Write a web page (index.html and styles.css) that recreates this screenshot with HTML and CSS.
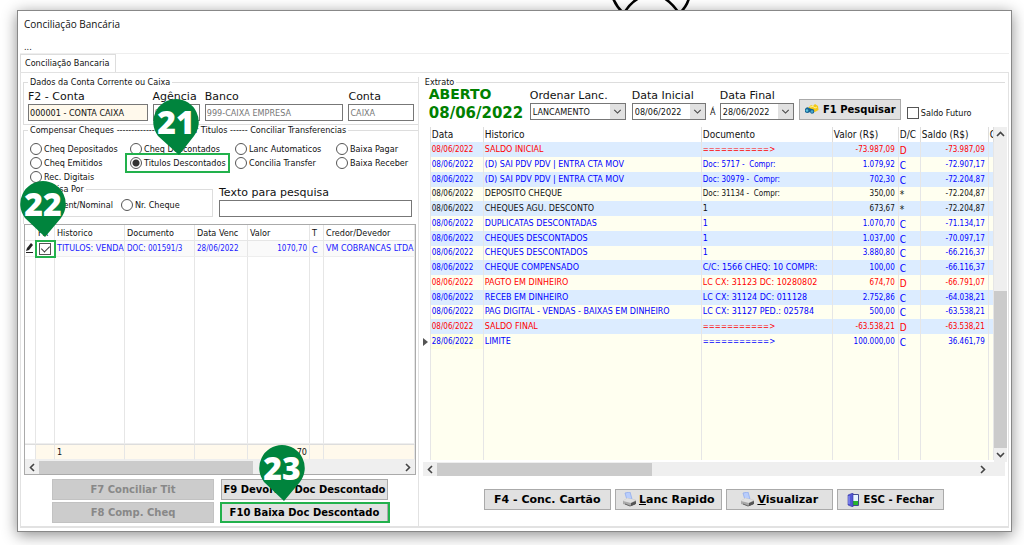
FILE: index.html
```html
<!DOCTYPE html>
<html lang="pt-BR">
<head>
<meta charset="utf-8">
<meta name="viewport" content="width=device-width, initial-scale=1">
<title>Conciliação Bancária</title>
<link rel="stylesheet" href="styles.css">
</head>
<body>
<svg class="backdrop" width="80" height="14" viewBox="0 0 80 14" fill="none" stroke="#000" stroke-width="2.6" aria-hidden="true">
  <path d="M1 -2Q4 6 11 13M27 -2Q18 3 12 13M52 -2Q60 3 67 13M77 -2Q75 6 68 13"/>
</svg>
<main class="window">
  <h1 class="title">Conciliação Bancária</h1>
  <div class="menu"><button type="button">...</button></div>
  <div class="tabs"><button type="button" class="tab">Conciliação Bancaria</button></div>
  <div class="page">
    <section class="left">
      <fieldset class="group account">
        <legend>Dados da Conta Corrente ou Caixa</legend>
        <div class="account-fields">
          <label class="field"><span>F2 - Conta</span><input class="cream" type="text" value="000001 - CONTA CAIXA"></label>
          <label class="field"><span>Agência</span><input type="text" value="0001" disabled></label>
          <label class="field"><span>Banco</span><input type="text" value="999-CAIXA EMPRESA" disabled></label>
          <label class="field"><span>Conta</span><input type="text" value="CAIXA" disabled></label>
        </div>
      </fieldset>
      <fieldset class="group options">
        <legend>Compensar Cheques --------------- Conciliar Titulos ------ Conciliar Transferencias</legend>
        <div class="radios">
          <label><input type="radio" name="tipo">Cheq Depositados</label>
          <label><input type="radio" name="tipo">Cheq Descontados</label>
          <label><input type="radio" name="tipo">Lanc Automaticos</label>
          <label><input type="radio" name="tipo">Baixa Pagar</label>
          <label><input type="radio" name="tipo">Cheq Emitidos</label>
          <label class="marked"><input type="radio" name="tipo" checked>Titulos Descontados</label>
          <label><input type="radio" name="tipo">Concilia Transfer</label>
          <label><input type="radio" name="tipo">Baixa Receber</label>
          <label><input type="radio" name="tipo">Rec. Digitais</label>
        </div>
        <div class="search">
          <fieldset class="group search-by">
            <legend>Pesquisa Por</legend>
            <label><input type="radio" name="por">Emitent/Nominal</label>
            <label><input type="radio" name="por">Nr. Cheque</label>
          </fieldset>
          <label class="field search-text"><span>Texto para pesquisa</span><input type="text"></label>
        </div>
      </fieldset>
      <div class="grid-box">
        <table class="titles">
          <colgroup><col class="w-ind"><col class="w-fx"><col class="w-hist"><col class="w-doc"><col class="w-date"><col class="w-val"><col class="w-t"><col></colgroup>
          <thead><tr><th></th><th>FX</th><th>Historico</th><th>Documento</th><th>Data Venc</th><th>Valor</th><th>T</th><th>Credor/Devedor</th></tr></thead>
          <tbody>
            <tr class="item"><td class="ind"><svg width="9" height="11" viewBox="0 0 9 11" aria-hidden="true"><path d="M1 9L2 6L6 1L8 3L4 8Z" fill="#222"/><path d="M1 10.500H8" stroke="#222"/></svg></td><td class="check"><input type="checkbox" checked aria-label="FX"></td><td class="broad">TITULOS: VENDA</td><td>DOC: 001591/3</td><td>28/06/2022</td><td class="num">1070,70</td><td class="dc">C</td><td class="broad">VM COBRANCAS LTDA</td></tr>
            <tr class="fill"><td></td><td></td><td></td><td></td><td></td><td></td><td></td><td></td></tr>
          </tbody>
          <tfoot><tr><td></td><td></td><td>1</td><td></td><td></td><td class="num">1070,70</td><td></td><td></td></tr></tfoot>
        </table>
        <div class="hbar"><svg width="14" height="13" viewBox="0 0 14 13"><path d="M9 3L5.500 6.500L9 10"/></svg><i class="thumb left-thumb"></i><svg width="14" height="13" viewBox="0 0 14 13"><path d="M5 3L8.500 6.500L5 10"/></svg></div>
      </div>
      <div class="left-actions">
        <button type="button" disabled>F7 Conciliar Tit</button>
        <button type="button">F9 Devolver Doc Descontado</button>
        <button type="button" disabled>F8 Comp. Cheq</button>
        <button type="button" class="marked-button">F10 Baixa Doc Descontado</button>
      </div>
    </section>

    <fieldset class="group right">
      <legend>Extrato</legend>
      <div class="filters">
        <div class="status"><strong>ABERTO</strong><b>08/06/2022</b></div>
        <label class="field order"><span>Ordenar Lanc.</span><span class="combo"><select><option>LANCAMENTO</option></select><svg viewBox="0 0 14 14"><path d="M4 5.500L7 8.500L10 5.500"/></svg></span></label>
        <label class="field date"><span>Data Inicial</span><span class="combo"><select><option>08/06/2022</option></select><svg viewBox="0 0 14 14"><path d="M4 5.500L7 8.500L10 5.500"/></svg></span></label>
        <span class="to">Á</span>
        <label class="field date"><span>Data Final</span><span class="combo"><select><option>28/06/2022</option></select><svg viewBox="0 0 14 14"><path d="M4 5.500L7 8.500L10 5.500"/></svg></span></label>
        <button type="button" class="find"><svg width="15" height="11" viewBox="0 0 15 11" aria-hidden="true"><path d="M4 4L7 1L9 2L11 0L14 2L14.500 6L11 8L7 7Z" fill="#f4c916"/><path d="M6 3L9 2.500L11 4L13 3" stroke="#fff39a" fill="none"/><path d="M1 5Q3 2 5 4L8 5Q11 5 10 9Q7 11 6 8Q3 10 1 8Z" fill="#176493"/><circle cx="3" cy="6.500" r="1.300" fill="#5bc4df"/><circle cx="8" cy="7.500" r="1.300" fill="#48a9cf"/></svg>F1 Pesquisar</button>
        <label class="future"><input type="checkbox">Saldo Futuro</label>
      </div>
      <div class="statement-box">
        <table class="statement">
          <colgroup><col class="s-ind"><col class="s-date"><col class="s-hist"><col class="s-doc"><col class="s-val"><col class="s-dc"><col class="s-bal"><col class="s-more"></colgroup>
          <thead><tr><th></th><th>Data</th><th>Historico</th><th>Documento</th><th>Valor (R$)</th><th>D/C</th><th>Saldo (R$)</th><th>C</th></tr></thead>
          <tbody>
            <tr class="red"><td></td><td>08/06/2022</td><td>SALDO INICIAL</td><td class="narrow">===========&gt;</td><td>-73.987,09</td><td>D</td><td>-73.987,09</td><td></td></tr>
            <tr class="blue"><td></td><td>08/06/2022</td><td>(D) SAI PDV PDV | ENTRA CTA MOV</td><td class="narrow">Doc: 5717 -&nbsp; Compr:</td><td>1.079,92</td><td>C</td><td>-72.907,17</td><td></td></tr>
            <tr class="blue"><td></td><td>08/06/2022</td><td>(D) SAI PDV PDV | ENTRA CTA MOV</td><td class="narrow">Doc: 30979 -&nbsp; Compr:</td><td>702,30</td><td>C</td><td>-72.204,87</td><td></td></tr>
            <tr><td></td><td>08/06/2022</td><td>DEPOSITO CHEQUE</td><td class="narrow">Doc: 31134 -&nbsp; Compr:</td><td>350,00</td><td>*</td><td>-72.204,87</td><td></td></tr>
            <tr><td></td><td>08/06/2022</td><td>CHEQUES AGU. DESCONTO</td><td>1</td><td>673,67</td><td>*</td><td>-72.204,87</td><td></td></tr>
            <tr class="blue"><td></td><td>08/06/2022</td><td>DUPLICATAS DESCONTADAS</td><td>1</td><td>1.070,70</td><td>C</td><td>-71.134,17</td><td></td></tr>
            <tr class="blue"><td></td><td>08/06/2022</td><td>CHEQUES DESCONTADOS</td><td>1</td><td>1.037,00</td><td>C</td><td>-70.097,17</td><td></td></tr>
            <tr class="blue"><td></td><td>08/06/2022</td><td>CHEQUES DESCONTADOS</td><td>1</td><td>3.880,80</td><td>C</td><td>-66.216,37</td><td></td></tr>
            <tr class="blue"><td></td><td>08/06/2022</td><td>CHEQUE COMPENSADO</td><td>C/C: 1566 CHEQ: 10 COMPR:</td><td>100,00</td><td>C</td><td>-66.116,37</td><td></td></tr>
            <tr class="red"><td></td><td>08/06/2022</td><td>PAGTO EM DINHEIRO</td><td>LC CX: 31123 DC: 10280802</td><td>674,70</td><td>D</td><td>-66.791,07</td><td></td></tr>
            <tr class="blue"><td></td><td>08/06/2022</td><td>RECEB EM DINHEIRO</td><td>LC CX: 31124 DC: 011128</td><td>2.752,86</td><td>C</td><td>-64.038,21</td><td></td></tr>
            <tr class="blue"><td></td><td>08/06/2022</td><td>PAG DIGITAL - VENDAS - BAIXAS EM DINHEIRO</td><td>LC CX: 31127 PED.: 025784</td><td>500,00</td><td>C</td><td>-63.538,21</td><td></td></tr>
            <tr class="red"><td></td><td>08/06/2022</td><td>SALDO FINAL</td><td class="narrow">===========&gt;</td><td>-63.538,21</td><td>D</td><td>-63.538,21</td><td></td></tr>
            <tr class="blue"><td><svg class="cursor" width="5" height="8" viewBox="0 0 5 8"><path d="M0 0L5 4L0 8Z" fill="#555"/></svg></td><td class="selected">28/06/2022</td><td>LIMITE</td><td class="narrow">===========&gt;</td><td>100.000,00</td><td>C</td><td>36.461,79</td><td></td></tr>
            <tr class="rest"><td></td><td></td><td></td><td></td><td></td><td></td><td></td><td></td></tr>
          </tbody>
        </table>
        <div class="vbar"><svg width="13" height="14" viewBox="0 0 13 14"><path d="M3 9L6.500 5.500L10 9"/></svg><i class="thumb"></i><svg width="13" height="14" viewBox="0 0 13 14"><path d="M3 5L6.500 8.500L10 5"/></svg></div>
      </div>
      <div class="hbar right-bar"><svg width="14" height="13" viewBox="0 0 14 13"><path d="M9 3L5.500 6.500L9 10"/></svg><i class="thumb right-thumb"></i><svg width="14" height="13" viewBox="0 0 14 13"><path d="M5 3L8.500 6.500L5 10"/></svg></div>
      <div class="right-actions">
        <button type="button" class="wide">F4 - Conc. Cartão</button>
        <button type="button"><svg width="15" height="15" viewBox="0 0 15 15" aria-hidden="true"><path d="M3 1L8 0L10 7L5 8Z" fill="#b9cdfb" stroke="#8ba8ec" stroke-width=".7"/><path d="M1 9L5 6L14 8L13 12L8 14L1 12Z" fill="#aaa"/><path d="M1 9L5 6L14 8L9 11Z" fill="#e0e0e0"/><path d="M3 12L8 14L13 12" stroke="#666" fill="none"/><path d="M9 11L14 9V12L9 14Z" fill="#555"/></svg><span><u>L</u>anc Rapido</span></button>
        <button type="button"><svg width="15" height="15" viewBox="0 0 15 15" aria-hidden="true"><path d="M3 1L8 0L10 7L5 8Z" fill="#b9cdfb" stroke="#8ba8ec" stroke-width=".7"/><path d="M1 9L5 6L14 8L13 12L8 14L1 12Z" fill="#aaa"/><path d="M1 9L5 6L14 8L9 11Z" fill="#e0e0e0"/><path d="M3 12L8 14L13 12" stroke="#666" fill="none"/><path d="M9 11L14 9V12L9 14Z" fill="#555"/></svg><span><u>V</u>isualizar</span></button>
        <button type="button" class="exit"><svg width="12" height="14" viewBox="0 0 12 14" aria-hidden="true"><path d="M5 1.500H11.500V12.500H5" fill="#e8f6ff" stroke="#444d91"/><path d="M6 8H11V12H6Z" fill="#27b72c"/><path d="M1 2L6 0V14L1 12Z" fill="#5257d5" stroke="#35389f" stroke-width=".6"/><path d="M2 3V11" stroke="#9ca3ff"/></svg>ESC - Fechar</button>
      </div>
    </fieldset>
  </div>
</main>
<div class="pin pin-21"><svg viewBox="0 0 46 56"><path d="M23 0A23 23 0 0 1 41 37L26 56L5 37A23 23 0 0 1 23 0Z"/></svg><span>21</span></div>
<div class="pin pin-22"><svg viewBox="0 0 46 56"><path d="M23 0A23 23 0 0 1 41 37L25 56L5 37A23 23 0 0 1 23 0Z"/></svg><span>22</span></div>
<div class="pin pin-23"><svg viewBox="0 0 46 56"><path d="M23 0A23 23 0 0 1 41 37L25 56L5 37A23 23 0 0 1 23 0Z"/></svg><span>23</span></div>
</body>
</html>
```
FILE: styles.css
```css
* { box-sizing: border-box; }
body {
  margin: 0;
  min-height: 100vh;
  padding: 10px 12px 13px 17px;
  display: flex;
  background: #fff;
  color: #111;
  font: 9px/10px "DejaVu Sans Condensed", "DejaVu Sans", sans-serif;
  overflow: hidden;
}
button, input, select { font: inherit; color: inherit; margin: 0; }
.backdrop { position: absolute; left: 612px; top: 0; }
.window {
  position: relative;
  flex: 1;
  min-width: 0;
  display: flex;
  flex-direction: column;
  padding: 0 2px 3px;
  background: #fff;
  border: 1px solid #888;
  box-shadow: 0 3px 14px rgba(0, 0, 0, .45);
}
.title { margin: 0; padding: 7px 4px 0; font: 10px/13px "Open Sans", sans-serif; }
.menu { height: 23px; padding: 11px 4px 0; border-bottom: 1px solid #eee; }
.menu button { border: 0; padding: 0; background: none; line-height: 10px; display: block; }
.tabs { display: flex; }
.tab {
  height: 18px;
  padding: 0 6px 2px 4px;
  border: 1px solid #ddd;
  border-bottom: 0;
  background: #fff;
}
.page {
  flex: 1;
  display: flex;
  gap: 4px;
  padding: 4px 3px 0 2px;
  border: 1px solid #e2e2e2;
  border-bottom-width: 2px;
}
.left { flex: 396 1 0; min-width: 0; display: flex; flex-direction: column; border-right: 1px solid #e2e2e2; }
.group { margin: 0; padding: 0; border: 1px solid #ddd; min-width: 0; }
.group legend { padding: 0 2px; height: 10px; white-space: nowrap; }
.account { border-right: 0; padding: 3px 4px 3px; }
.account-fields { display: grid; grid-template-columns: 119fr 47fr 138fr 65fr; column-gap: 5px; }
.field { display: flex; flex-direction: column; min-width: 0; }
.field > span:first-child { font: 11px/14px "DejaVu Sans", sans-serif; white-space: nowrap; }
.field input { width: 100%; height: 17px; padding: 0 1px; border: 1px solid #777; background: #fff; border-radius: 0; }
.field input:disabled { color: #777; }
.field input.cream { background: #fff9ec; }
.options { border-right: 0; border-bottom: 0; padding: 7px 4px 7px; }
.radios { display: grid; grid-template-columns: 100px 105px 101px 1fr; grid-auto-rows: 14px; padding-left: 2px; }
label { white-space: nowrap; }
.radios label, .search-by label { display: flex; align-items: center; gap: 2px; position: relative; }
.radios label { justify-self: start; }
input[type=radio] {
  appearance: none;
  flex: none;
  width: 12px;
  height: 12px;
  border: 1px solid #555;
  border-radius: 50%;
  background: #fff;
}
input[type=radio]:checked { background: radial-gradient(circle, #333 0 3px, #fff 4px); }
.marked::after, .marked-button::after {
  content: "";
  position: absolute;
  inset: -3px -4px -3px -5px;
  border: 2px solid #22b14c;
}
.search { display: grid; grid-template-columns: 185px 1fr; gap: 6px; padding-right: 2px; }
.search-by { display: flex; gap: 8px; padding: 3px 2px 4px; }
.search-text { padding-top: 2px; }
.grid-box { flex: 1; display: flex; flex-direction: column; margin: 0 2px 0 1px; border: 1px solid #aaa; }
table { border-collapse: separate; border-spacing: 0; table-layout: fixed; width: 100%; }
th, td { padding: 0 2px; font-weight: 400; text-align: left; white-space: nowrap; overflow: hidden; border-right: 1px solid #e6e6e6; }
.titles { flex: 1; height: 234px; }
.titles th { height: 16px; border-bottom: 1px solid #e6e6e6; }
.titles td { border-bottom: 1px solid #eee; }
.titles .item td { height: 16px; color: #2020ff; font-size: 8px; background: #fafafa; }
.titles .item .broad { font-family: "DejaVu Sans", sans-serif; }
.titles .item td.dc { font-size: 9px; padding-top: 2px; }
.titles .item .ind, .titles .item .check { padding: 0; background: #fff; overflow: visible; }
.titles tfoot td { height: 16px; background: #fff9ec; border-top: 1px solid #ddd; }
.titles tfoot td:first-child { background: #fff; }
.num { text-align: right; }
.w-ind { width: 11px; } .w-fx { width: 19px; } .w-hist { width: 70px; } .w-doc { width: 70px; }
.w-date { width: 53px; } .w-val { width: 62px; } .w-t { width: 14px; }
.check { outline: 2px solid #22b14c; outline-offset: -1px; text-align: center; }
input[type=checkbox] {
  appearance: none;
  display: inline-block;
  position: relative;
  width: 12px;
  height: 12px;
  border: 1px solid #555;
  background: #fff;
  vertical-align: middle;
}
input[type=checkbox]:checked::after {
  content: "";
  position: absolute;
  left: 3px;
  top: 0;
  width: 4px;
  height: 7px;
  border: solid #333;
  border-width: 0 1px 1px 0;
  transform: rotate(45deg);
}
.hbar { display: flex; height: 14px; background: #efefef; align-items: center; }
.hbar svg, .vbar svg { flex: none; fill: none; stroke: #444; stroke-width: 1.600; }
.thumb { background: #cbcbcb; }
.left-thumb { height: 13px; flex: none; width: 55%; }
.right-thumb { height: 13px; flex: none; width: 38%; }
.hbar svg:last-child { margin-left: auto; }
.right-bar { padding-right: 15px; }
.left-actions { display: grid; grid-template-columns: 162px 167px; gap: 2px 7px; padding: 4px 0 3px 29px; }
.left-actions button, .right-actions button, .find {
  position: relative;
  height: 21px;
  padding: 0;
  border: 1px solid #aaa;
  background: #e1e1e1;
  font: bold 10px/12px "DejaVu Sans", sans-serif;
  color: #000;
  white-space: nowrap;
}
.left-actions button:disabled { background: #ccc; color: #888; border-color: #c2c2c2; }
.left-actions .marked-button::after { inset: -1px -3px -1px -2px; }
.right { flex: 584 1 0; display: flex; flex-direction: column; border-width: 1px 0 0; }
.filters { display: flex; align-items: flex-start; height: 40px; padding-left: 6px; }
.status { width: 101px; color: #008000; font: 15px/22px "DejaVu Sans", sans-serif; }
.status strong { display: block; font-size: 14px; line-height: 15px; }
.status b { display: block; }
.combo { position: relative; display: block; }
.combo select {
  appearance: none;
  display: block;
  width: 100%;
  height: 17px;
  padding: 0 16px 0 2px;
  border: 1px solid #777;
  border-radius: 0;
  background: #fff;
}
.combo svg { position: absolute; right: 1px; top: 1px; width: 15px; height: 15px; background: #e1e1e1; fill: none; stroke: #444; pointer-events: none; }
.filters .field { padding-top: 2px; }
.order { width: 96px; margin-right: 6px; }
.date { width: 74px; }
.to { width: 14px; padding-top: 20px; text-align: center; }
.find { display: flex; align-items: center; justify-content: center; gap: 4px; width: 102px; margin: 12px 6px 0 5px; }
.future { display: flex; align-items: center; gap: 2px; margin-top: 20px; }
.statement-box { display: flex; flex: 1; }
.statement { flex: 1; width: 0; height: 333px; }
.statement th { height: 15px; padding: 0 1px; font-size: 10px; line-height: 14px; border-right-color: #ddd; }
.statement td { height: 15px; padding: 0 1px; font-size: 8px; line-height: 10px; background: #fffff0; }
.statement tr:nth-child(4n) td { height: 14px; }
.statement tr:nth-child(odd) td { background: #dcecff; }
.statement tr td:first-child, .statement tr:nth-child(odd) td:first-child { background: #fff; }
.statement tr.rest td { background: #fffff0; height: auto; }
.statement tr .selected { background: #ffffe1; }
.statement td:nth-child(3), .statement td:nth-child(4) { font-family: "DejaVu Sans", sans-serif; }
.statement td.narrow:nth-child(4) { font-family: "DejaVu Sans Condensed", "DejaVu Sans", sans-serif; }
.statement td:nth-child(5), .statement td:nth-child(7) { text-align: right; padding-right: 3px; }
.statement td:nth-child(6) { font-size: 10px; padding-top: 2px; }
.red td { color: #f00; }
.blue td { color: #00f; }
.s-ind { width: 8px; } .s-date { width: 53px; } .s-hist { width: 218px; } .s-doc { width: 131px; }
.s-val { width: 66px; } .s-dc { width: 22px; } .s-bal { width: 68px; } .s-more { width: 5px; }
.statement td:first-child { padding: 0; }
.cursor { display: block; }
.vbar { display: flex; flex-direction: column; width: 13px; background: #efefef; }
.vbar .thumb { height: 47%; margin-top: auto; }
.right-actions { display: flex; gap: 4px; padding: 13px 0 16px 61px; }
.right-actions button { display: flex; align-items: center; justify-content: center; gap: 2px; width: 107px; font-size: 11px; }
.right-actions .wide { width: 127px; }
.right-actions .exit { gap: 5px; font-size: 10px; }
.pin { position: absolute; width: 46px; height: 56px; }
.pin svg { display: block; width: 46px; height: 56px; fill: #00843d; }
.pin span { position: absolute; inset: 0; text-align: center; font: 800 32px/46px "Open Sans", sans-serif; color: #fff; }
.pin-21 { left: 153px; top: 99px; }
.pin-22 { left: 20px; top: 181px; }
.pin-23 { left: 259px; top: 445px; }
```
